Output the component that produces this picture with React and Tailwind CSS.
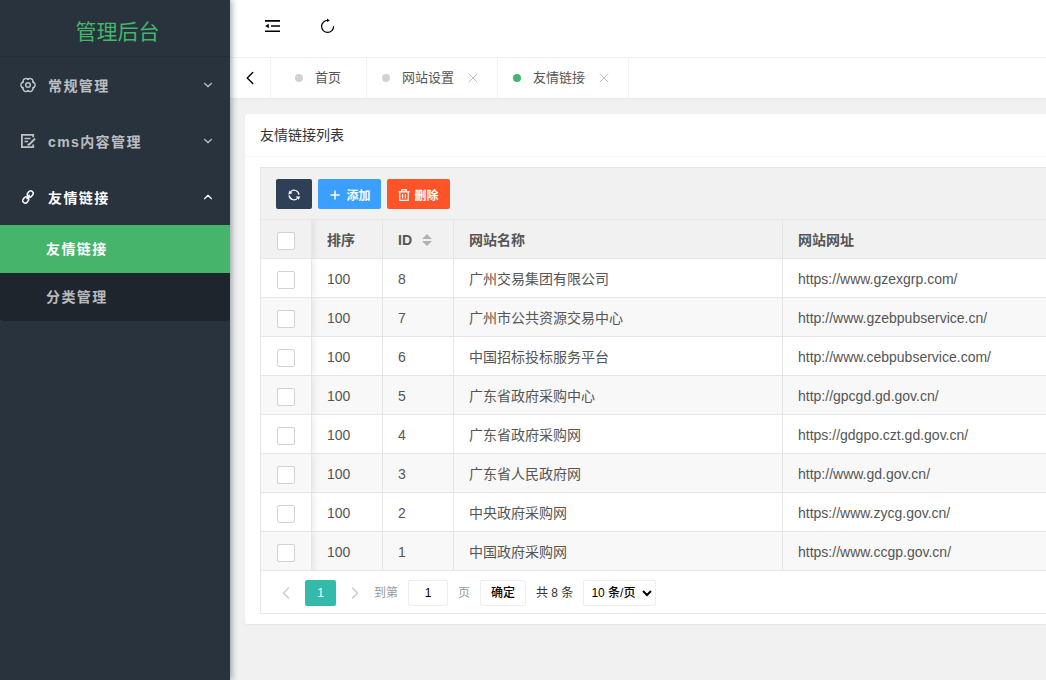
import React, { useState } from 'react';
import { ChevronDown, ChevronLeft, ChevronRight, ChevronUp, Plus, X } from 'lucide-react';

const LINKS = [
    { id: 8, sort: 100, name: '广州交易集团有限公司', url: 'https://www.gzexgrp.com/' },
    { id: 7, sort: 100, name: '广州市公共资源交易中心', url: 'http://www.gzebpubservice.cn/' },
    { id: 6, sort: 100, name: '中国招标投标服务平台', url: 'http://www.cebpubservice.com/' },
    { id: 5, sort: 100, name: '广东省政府采购中心', url: 'http://gpcgd.gd.gov.cn/' },
    { id: 4, sort: 100, name: '广东省政府采购网', url: 'https://gdgpo.czt.gd.gov.cn/' },
    { id: 3, sort: 100, name: '广东省人民政府网', url: 'http://www.gd.gov.cn/' },
    { id: 2, sort: 100, name: '中央政府采购网', url: 'https://www.zycg.gov.cn/' },
    { id: 1, sort: 100, name: '中国政府采购网', url: 'https://www.ccgp.gov.cn/' },
];

// --- ICONS ---
const GearIcon = () => (
    <svg viewBox="0 0 16 16" className="size-4" fill="none" stroke="currentColor" strokeWidth="1.5">
        {[0, 60, 120, 180, 240, 300].map((deg) => (
            <path key={deg} d="M12.5 5.4C15.9 4.8 15.9 11.2 12.5 10.6" transform={`rotate(${deg} 8 8)`} />
        ))}
        <circle cx="8" cy="8" r="2.3" />
    </svg>
);

const FormIcon = () => (
    <svg viewBox="0 0 16 16" className="size-4" fill="none" stroke="currentColor" strokeWidth="1.8">
        <path d="M13.2 4.2V1.9H1.9v12.2h11.3v-2.6" />
        <path d="M4.5 5.6h6M4.5 8.6h3.5" strokeWidth="1.5" />
        <path d="M15 5.6 9.6 11.2l-2 .8" strokeWidth="2" />
    </svg>
);

const LinkIcon = () => (
    <svg viewBox="0 0 16 16" className="size-4" fill="none" stroke="currentColor" strokeWidth="1.5">
        <rect x="7.8" y="1.7" width="5" height="6.4" rx="2.5" transform="rotate(35 10.3 4.9)" />
        <rect x="3.2" y="7.8" width="5" height="6.4" rx="2.5" transform="rotate(35 5.7 11)" />
        <path d="M9.6 5.6 6.6 10.2" />
    </svg>
);

const FoldIcon = () => (
    <svg viewBox="0 0 16 14" className="h-3.5 w-4" fill="currentColor">
        <path d="M1 1h15v1.7H1zM7 6.2h9v1.6H7zM1 11.4h15v1.7H1zM1.2 7l3.6-2.2v4.4z" />
    </svg>
);

const RefreshIcon = () => (
    <svg viewBox="0 0 16 16" className="size-4" fill="none" stroke="currentColor" strokeWidth="1.2">
        <path d="M13.6 8.2A6 6 0 1 1 8 2.4" />
        <path d="M7 .5 9.8 2.4 7 4.1z" fill="currentColor" stroke="none" />
    </svg>
);

const ReloadIcon = () => (
    <svg viewBox="0 0 14 14" className="size-3.5" fill="none" stroke="currentColor" strokeWidth="1.3">
        <path d="M3.6 3.6A4.9 4.9 0 0 1 11.9 6.6M10.4 10.4A4.9 4.9 0 0 1 2.1 7.4" />
        <path d="M1.2 6.4 2.6 2.4 5.4 5.2zM8.8 8.4h4.4l-1.6 3.4z" fill="currentColor" stroke="none" />
    </svg>
);

const TrashIcon = () => (
    <svg viewBox="0 0 12 12" className="size-3" fill="none" stroke="currentColor" strokeWidth="1.2">
        <path d="M.4 2.9h11.2M3.6 2.8V.8h4.8v2M1.8 3v8.3h8.4V3M4.6 5v4.4M7.4 5v4.4" />
    </svg>
);

const SortIcon = () => (
    <svg viewBox="0 0 10 12" className="h-3 w-2.5" fill="#b2b2b2">
        <path d="M0 5 5 0l5 5zM0 7h10l-5 5z" />
    </svg>
);

const MENU = [
    { title: '常规管理', icon: <GearIcon /> },
    { title: 'cms内容管理', icon: <FormIcon /> },
    { title: '友情链接', icon: <LinkIcon />, open: true, children: ['友情链接', '分类管理'] },
];

const Sidebar = () => (
    <aside className="relative z-10 w-[230px] shrink-0 bg-[#28333e] shadow-[2px_0_6px_rgba(0,21,41,0.35)]">
        <h1 className="flex h-[57px] items-center justify-center border-b border-[#232d37] pl-[5px] pt-2 text-[21px] text-[#44b56a]">
            管理后台
        </h1>
        <nav className="text-sm font-bold tracking-widest text-white/70">
            {MENU.map((item) => (
                <div key={item.title}>
                    <a href="#" className={`flex h-14 items-center pl-5 pr-[15px] ${item.open ? 'text-white' : ''}`}>
                        {item.icon}
                        <span className="ml-3 flex-1 pt-0.5">{item.title}</span>
                        {item.open ? <ChevronUp size={14} /> : <ChevronDown size={14} />}
                    </a>
                    {item.children && (
                        <div className="overflow-hidden rounded-b-sm bg-[#1e252d]">
                            {item.children.map((child, i) => (
                                <a
                                    key={child}
                                    href="#"
                                    className={`flex h-12 items-center pl-[46px] ${i === 0 ? 'bg-[#44b56a] text-white' : ''}`}
                                >
                                    {child}
                                </a>
                            ))}
                        </div>
                    )}
                </div>
            ))}
        </nav>
    </aside>
);

const Tab = ({ title, active, closable }) => (
    <div className="flex items-center border-r border-[#f2f2f2] pl-[15px]">
        <span className={`size-2 rounded-full ${active ? 'bg-[#44b56a]' : 'bg-[#d2d2d2]'}`}></span>
        <a href="#" className="ml-3 text-[13px] text-[#555]">{title}</a>
        {closable && (
            <button className="ml-[11px] mr-4 text-[#c2c2c2]" aria-label="关闭">
                <X size={16} strokeWidth={1.5} />
            </button>
        )}
    </div>
);

const Check = ({ label, ...props }) => (
    <input
        type="checkbox"
        aria-label={label}
        className="block size-[18px] appearance-none rounded-xs border border-[#d2d2d2] bg-white checked:border-[#44b56a] checked:bg-[#44b56a]"
        {...props}
    />
);

const FIXED_CELL =
    'relative border-b border-r border-[#e6e6e6] bg-inherit pl-4 pt-1 shadow-[1px_0_8px_rgba(0,0,0,0.1)] [clip-path:inset(0_-8px_0_0)]';
const CELL = 'h-[39px] border-b border-r border-[#e6e6e6] px-[15px] pt-0.5 last:border-r-0';

const LinkTable = () => {
    const [selected, setSelected] = useState([]);
    const allSelected = selected.length === LINKS.length;

    const toggle = (id) => {
        setSelected(selected.includes(id) ? selected.filter((s) => s !== id) : [...selected, id]);
    };

    return (
        <table className="w-full table-fixed border-separate border-spacing-0 text-left text-sm text-[#555]">
            <colgroup>
                <col className="w-[51px]" />
                <col className="w-[71px]" />
                <col className="w-[71px]" />
                <col className="w-[329px]" />
                <col />
            </colgroup>
            <thead>
                <tr className="bg-[#f1f1f1]">
                    <th className={FIXED_CELL}>
                        <Check
                            label="全选"
                            checked={allSelected}
                            onChange={() => setSelected(allSelected ? [] : LINKS.map((l) => l.id))}
                        />
                    </th>
                    <th className={CELL}>排序</th>
                    <th className={CELL}>
                        <span className="flex items-center gap-2.5">ID <SortIcon /></span>
                    </th>
                    <th className={CELL}>网站名称</th>
                    <th className={CELL}>网站网址</th>
                </tr>
            </thead>
            <tbody>
                {LINKS.map((link) => (
                    <tr key={link.id} className="bg-white even:bg-[#f8f8f8]">
                        <td className={FIXED_CELL}>
                            <Check
                                label={link.name}
                                checked={selected.includes(link.id)}
                                onChange={() => toggle(link.id)}
                            />
                        </td>
                        <td className={CELL}>{link.sort}</td>
                        <td className={CELL}>{link.id}</td>
                        <td className={CELL}>{link.name}</td>
                        <td className={CELL}>{link.url}</td>
                    </tr>
                ))}
            </tbody>
        </table>
    );
};

const Pager = () => (
    <div className="flex h-[43px] items-center border-b border-[#e6e6e6] pl-[15px] pt-0.5 text-xs text-[#333]">
        <button className="flex w-[29px] justify-start text-[#ccc]" aria-label="上一页">
            <ChevronLeft size={20} strokeWidth={1.8} />
        </button>
        <button className="h-[26px] w-[31px] rounded-xs bg-[#33baab] text-white">1</button>
        <button className="flex w-[38px] justify-center text-[#ccc]" aria-label="下一页">
            <ChevronRight size={20} strokeWidth={1.8} />
        </button>
        <div className="flex items-center gap-2.5">
            <label htmlFor="page" className="text-[#999]">到第</label>
            <input
                id="page"
                defaultValue="1"
                className="h-[26px] w-10 rounded-xs border border-[#eee] bg-white text-center text-black"
            />
            <span className="text-[#999]">页</span>
            <button className="h-[26px] w-[46px] rounded-xs border border-[#eee] bg-white font-medium text-black">
                确定
            </button>
            <span>共 8 条</span>
            <select
                aria-label="每页条数"
                className="h-[26px] w-[73px] rounded-xs border border-[#eee] bg-white pl-[3px] font-medium text-black"
            >
                <option>10 条/页</option>
                <option>20 条/页</option>
                <option>50 条/页</option>
            </select>
        </div>
    </div>
);

const App = () => {
    return (
        <div className="flex min-h-screen bg-[#f1f1f1] font-['Liberation_Sans','Noto_Sans_CJK_SC',sans-serif]">
            <Sidebar />

            <div className="min-w-0 flex-1">
                {/* Header */}
                <header className="flex h-[58px] items-center gap-10 border-b border-[#f2f2f2] bg-white pb-1.5 pl-[34px] text-black">
                    <button aria-label="收起菜单"><FoldIcon /></button>
                    <button aria-label="刷新"><RefreshIcon /></button>
                </header>

                {/* Page tabs */}
                <div className="flex h-10 bg-white shadow-xs">
                    <button className="flex w-[41px] items-center justify-center border-r border-[#f2f2f2] text-black" aria-label="向左">
                        <ChevronLeft size={22} strokeWidth={1.5} />
                    </button>
                    <div className="flex w-24 justify-center border-r border-[#f2f2f2] pr-px">
                        <div className="flex items-center gap-3">
                            <span className="size-2 rounded-full bg-[#d2d2d2]"></span>
                            <a href="#" className="text-[13px] text-[#555]">首页</a>
                        </div>
                    </div>
                    <Tab title="网站设置" closable />
                    <Tab title="友情链接" active closable />
                </div>

                {/* Card */}
                <main className="pl-[15px] pt-4">
                    <section className="rounded-l-xs bg-white shadow-[0_1px_2px_rgba(0,0,0,0.05)]">
                        <h2 className="flex h-[43px] items-center border-b border-[#f6f6f6] px-[15px] text-sm text-[#333]">
                            友情链接列表
                        </h2>
                        <div className="pb-2.5 pl-[15px] pt-2.5">
                            <div className="border-l border-t border-[#e6e6e6]">
                                <div className="flex h-[52px] items-center gap-1.5 border-b border-[#e6e6e6] bg-[#f1f1f1] pl-[15px] text-xs font-bold text-white">
                                    <button className="flex h-[30px] w-9 items-center justify-center rounded-xs bg-[#2f4056] pt-0.5" aria-label="刷新表格">
                                        <ReloadIcon />
                                    </button>
                                    <button className="flex h-[30px] w-[63px] items-center justify-center gap-1 rounded-xs bg-[#3a9fff] pt-0.5">
                                        <Plus size={14} strokeWidth={2.5} />
                                        <span className="pt-0.5">添加</span>
                                    </button>
                                    <button className="flex h-[30px] w-[63px] items-center justify-center gap-1 rounded-xs bg-[#ff5428] pt-0.5">
                                        <TrashIcon />
                                        <span className="pt-0.5">删除</span>
                                    </button>
                                </div>
                                <LinkTable />
                                <Pager />
                            </div>
                        </div>
                    </section>
                </main>
            </div>
        </div>
    );
};

export default App;
